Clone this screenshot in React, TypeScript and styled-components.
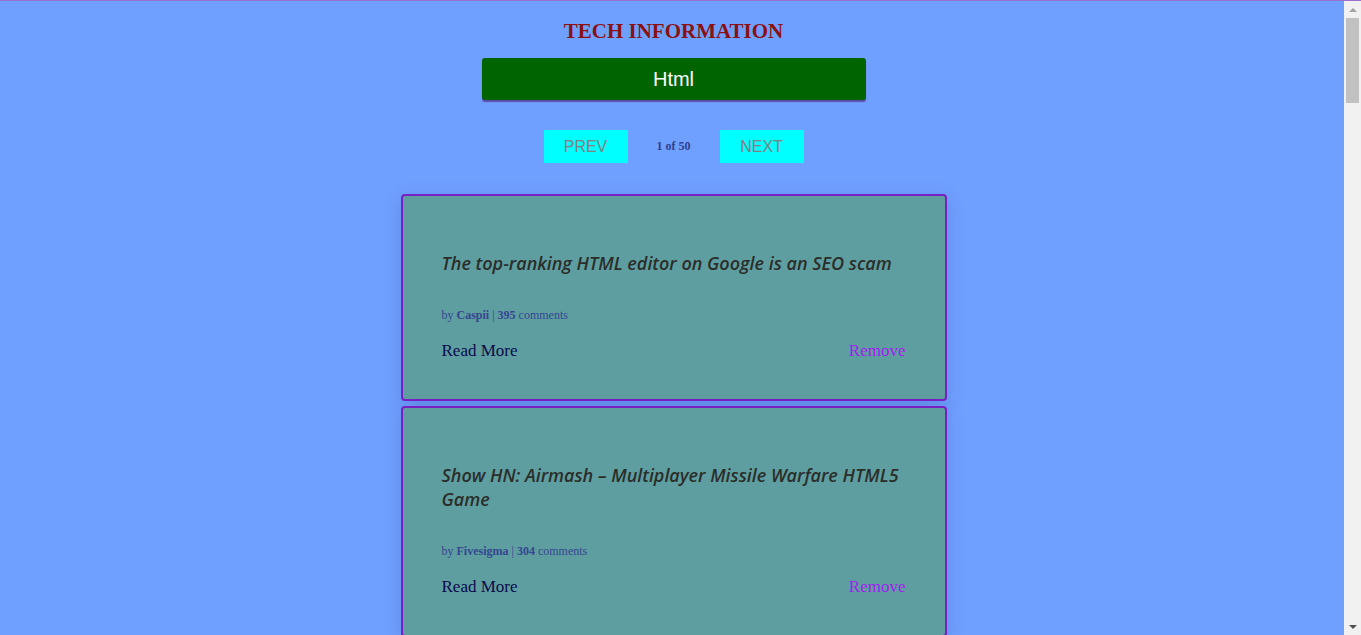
import React from "react";
import styled, { createGlobalStyle } from "styled-components";

const GlobalStyle = createGlobalStyle`
  html, body {
    margin: 0;
    padding: 0;
    background: #70a0ff;
    overflow: hidden;
  }
  body {
    font-family: "Liberation Serif", "Times New Roman", serif;
    border-top: 1px solid #9b70cc;
  }
`;

const Shell = styled.div`
  display: flex;
  height: 634px;
`;

const Page = styled.main`
  flex: 1;
  display: flex;
  flex-direction: column;
  align-items: center;
  padding-top: 18px;
  padding-left: 3px;
  overflow: hidden;

  & > * {
    flex-shrink: 0;
  }
`;

const ScrollTrack = styled.div`
  width: 17px;
  flex: none;
  background: #f1f1f1;
  display: flex;
  flex-direction: column;
  align-items: center;
`;

const ScrollArrow = styled.div<{ $dir: "up" | "down" }>`
  width: 17px;
  height: 17px;
  display: flex;
  align-items: center;
  justify-content: center;

  &::before {
    content: "";
    width: 0;
    height: 0;
    border-left: 4px solid transparent;
    border-right: 4px solid transparent;
    ${(p) =>
      p.$dir === "up"
        ? "border-bottom: 4px solid #a3a3a3;"
        : "border-top: 4px solid #505050;"}
  }
`;

const ScrollThumb = styled.div`
  width: 13px;
  height: 85px;
  background: #c1c1c1;
`;

const ScrollSpace = styled.div`
  flex: 1;
`;

const Title = styled.h1`
  margin: 0;
  font-family: "Liberation Serif", "Times New Roman", serif;
  font-weight: bold;
  font-size: 21px;
  line-height: 24px;
  color: #8b1010;
`;

const TopicButton = styled.button`
  margin-top: 15px;
  width: 384px;
  height: 42px;
  border: none;
  border-radius: 3px;
  background: #006400;
  color: #ffffff;
  font-family: "Liberation Sans", Arial, sans-serif;
  font-size: 20px;
  box-shadow: 0 2px 1px rgba(80, 40, 140, 0.7);
  cursor: pointer;
`;

const Pager = styled.div`
  margin-top: 30px;
  display: flex;
  align-items: center;
  gap: 29px;
`;

const PageButton = styled.button`
  width: 84px;
  height: 33px;
  border: none;
  background: #00ffff;
  color: #808080;
  font-family: "Liberation Sans", Arial, sans-serif;
  font-size: 16px;
  padding: 0;
  cursor: pointer;
`;

const PageInfo = styled.span`
  font-family: "Liberation Serif", "Times New Roman", serif;
  font-weight: bold;
  font-size: 12px;
  color: #2f3f8f;
`;

const List = styled.div`
  margin-top: 31px;
  display: flex;
  flex-direction: column;
  gap: 5px;
`;

const Card = styled.article`
  width: 546px;
  box-sizing: border-box;
  border: 2px solid #7a1fc4;
  border-radius: 4px;
  background: #5f9ea0;
  padding: 55px 39px 38px 39px;
  box-shadow: 0 4px 18px rgba(40, 40, 120, 0.18);
`;

const CardTitle = styled.h3`
  margin: 0;
  font-family: "Open Sans", "Noto Sans", sans-serif;
  font-style: italic;
  font-weight: 600;
  font-size: 18px;
  line-height: 24px;
  color: #2a2e2b;
`;

const Meta = styled.p`
  margin: 32px 0 0 0;
  font-family: "Liberation Serif", "Times New Roman", serif;
  font-size: 12px;
  line-height: 16px;
  color: #34468f;

  b {
    font-weight: bold;
  }
`;

const Actions = styled.div`
  margin-top: 18px;
  display: flex;
  justify-content: space-between;
  align-items: center;
  line-height: 20px;
  font-family: "Liberation Serif", "Times New Roman", serif;
  font-size: 17px;
`;

const ActionLink = styled.a<{ $tone: "read" | "remove" }>`
  color: ${(p) => (p.$tone === "read" ? "#0a0a4a" : "#a020f0")};
  text-decoration: none;
  cursor: pointer;
`;

type Story = { title: string; author: string; comments: number };

const stories: Story[] = [
  { title: "The top-ranking HTML editor on Google is an SEO scam", author: "Caspii", comments: 395 },
  { title: "Show HN: Airmash – Multiplayer Missile Warfare HTML5 Game", author: "Fivesigma", comments: 304 },
];

export default function App() {
  return (
    <>
      <GlobalStyle />
      <Shell>
        <Page>
          <Title>TECH INFORMATION</Title>
          <TopicButton>Html</TopicButton>
          <Pager>
            <PageButton>PREV</PageButton>
            <PageInfo>1 of 50</PageInfo>
            <PageButton>NEXT</PageButton>
          </Pager>
          <List>
            {stories.map((s, i) => (
              <Card key={i}>
                <CardTitle>{s.title}</CardTitle>
                <Meta>
                  by <b>{s.author}</b> | <b>{s.comments}</b> comments
                </Meta>
                <Actions>
                  <ActionLink $tone="read">Read More</ActionLink>
                  <ActionLink $tone="remove">Remove</ActionLink>
                </Actions>
              </Card>
            ))}
          </List>
        </Page>
        <ScrollTrack>
          <ScrollArrow $dir="up" />
          <ScrollThumb />
          <ScrollSpace />
          <ScrollArrow $dir="down" />
        </ScrollTrack>
      </Shell>
    </>
  );
}
